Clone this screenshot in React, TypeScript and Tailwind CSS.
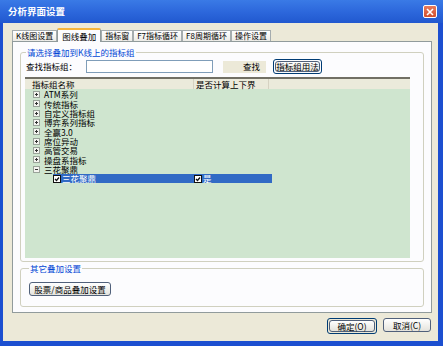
const font = "font-['Noto_Sans_CJK_SC','Noto_Sans',sans-serif]";

const tabs = ["K线图设置", "图线叠加", "指标窗", "F7指标循环", "F8周期循环", "操作设置"];

const groups = [
  "ATM系列",
  "传统指标",
  "自定义指标组",
  "博弈系列指标",
  "全赢3.0",
  "席位异动",
  "高管交易",
  "操盘系指标",
];

function Expander({ open }: { open?: boolean }) {
  return (
    <svg width="7" height="7" viewBox="0 0 7 7" className="shrink-0">
      <rect x="0.5" y="0.5" width="6" height="6" fill="#f4f4f0" stroke="#9aa39a" />
      <path d="M2 3.5h3" stroke="#333" />
      {!open && <path d="M3.5 2v3" stroke="#333" />}
    </svg>
  );
}

function Check() {
  return (
    <svg width="8" height="8" viewBox="0 0 8 8" className="shrink-0">
      <rect x="0.5" y="0.5" width="7" height="7" fill="#fff" stroke="#111" />
      <path d="M2 4l1.5 1.5L6 2.5" stroke="#111" strokeWidth="1.3" fill="none" />
    </svg>
  );
}

function XpButton({ label, className }: { label: string; className?: string }) {
  return (
    <div
      className={[
        "flex items-center justify-center rounded-[3px] border border-[#50607a] bg-gradient-to-b from-[#ffffff] to-[#e4e3dc] text-[8.5px] leading-none text-black",
        className,
      ].join(" ")}
    >
      {label}
    </div>
  );
}

export default function App() {
  return (
    <div className={`${font} flex h-[346px] w-[443px] flex-col bg-[#1c4fd0] select-none`}>
      {/* title bar */}
      <div className="flex h-[23px] shrink-0 items-center justify-between bg-gradient-to-b from-[#3a7ae6] via-[#2d68dc] to-[#2158cf] pl-[8px] pr-[6px]">
        <span className="text-[9.5px] font-bold text-white">分析界面设置</span>
        <div className="flex h-[13px] w-[14px] items-center justify-center rounded-[2px] border border-white bg-gradient-to-b from-[#e87a5c] to-[#d2502d]">
          <svg width="8" height="8" viewBox="0 0 8 8">
            <path d="M1 1l6 6M7 1L1 7" stroke="#fff" strokeWidth="1.6" />
          </svg>
        </div>
      </div>

      {/* body */}
      <div className="ml-[3px] mr-[5px] mb-[5px] flex flex-1 flex-col bg-[#ece9d8] pl-[9px] pr-[6px] pt-[5px]">
        {/* tabs */}
        <div className="flex h-[13px] items-end">
          {tabs.map((t, i) =>
            i === 1 ? (
              <div
                key={t}
                className="relative z-10 -mb-px flex h-[14px] items-center rounded-t-[2px] border border-b-0 border-[#919b9c] border-t-[#f5b53c] border-t-2 bg-[#fcfcfe] px-[4px] text-[8.5px] leading-none text-black"
              >
                {t}
              </div>
            ) : (
              <div
                key={t}
                className="flex h-[11px] items-center border border-b-0 border-[#a5acae] bg-gradient-to-b from-[#ffffff] to-[#ecebe6] px-[3px] text-[8px] leading-none text-black"
              >
                {t}
              </div>
            ),
          )}
        </div>

        {/* panel */}
        <div className="flex h-[272px] w-[420px] flex-col border border-[#919b9c] bg-[#fcfcfe] px-[7px]">
          <fieldset className="mt-[5px] h-[215px] rounded-[3px] border border-[#d0d0bf] px-[4px] pr-[13px]">
            <legend className="ml-[1px] px-[1px] text-[8.5px] leading-[10px] text-[#0046d5]">
              请选择叠加到K线上的指标组
            </legend>
            <div className="mt-[3px] flex h-[13px] items-center">
              <span className="ml-[1px] w-[60px] text-[8.5px] leading-none text-black">查找指标组：</span>
              <div className="h-[13px] w-[127px] border border-[#7f9db9] bg-white" />
              <div className="ml-[10px] flex h-[12px] w-[43px] items-center justify-end bg-[#ece9d8] pr-[6px] text-[8.5px] leading-none text-black">
                查找
              </div>
              <div className="ml-[7px] rounded-[3px] border border-[#003c74] p-px">
                <XpButton
                  label="指标组用法"
                  className="h-[11px] w-[45px] border-[#7da2ce] rounded-[2px]"
                />
              </div>
            </div>

            {/* list */}
            <div className="mt-[4px] flex h-[181px] flex-col border-t-2 border-[#716f64] bg-[#cfe5cf]">
              <div className="flex h-[10px] shrink-0 bg-[#ebeadb] text-[8.5px] leading-[10px] text-black">
                <div className="w-[169px] border-r border-[#d6d2c2] pl-[7px]">指标组名称</div>
                <div className="w-[75px] border-r border-[#d6d2c2] pl-[2px]">是否计算上下界</div>
              </div>
              <div className="flex flex-col pt-[1px] text-[8.5px] text-black">
                {groups.map((g) => (
                  <div key={g} className="flex h-[9.33px] items-center gap-[4px] pl-[8px] leading-none">
                    <Expander />
                    <span>{g}</span>
                  </div>
                ))}
                <div className="flex h-[9.33px] items-center gap-[4px] pl-[8px] leading-none">
                  <Expander open />
                  <span>三花聚鼎</span>
                </div>
                <div className="ml-[28px] flex h-[9.33px] w-[219px] items-center bg-[#316ac5] leading-none text-white">
                  <Check />
                  <span className="ml-[1px] w-[132px]">三花聚鼎</span>
                  <Check />
                  <span className="ml-[1px]">是</span>
                </div>
              </div>
            </div>
          </fieldset>

          <fieldset className="mt-[1px] h-[44px] rounded-[3px] border border-[#d0d0bf] px-[8px]">
            <legend className="px-[1px] text-[8.5px] leading-[10px] text-[#0046d5]">其它叠加设置</legend>
            <XpButton label="股票/商品叠加设置" className="mt-[9px] h-[14px] w-[82px]" />
          </fieldset>
        </div>

        {/* dialog buttons */}
        <div className="mt-[5px] flex justify-end gap-[6px] pr-[1px]">
          <div className="rounded-[3px] border border-[#003c74] p-px">
            <XpButton label="确定(O)" className="h-[12px] w-[46px] border-[#7da2ce] rounded-[2px]" />
          </div>
          <XpButton label="取消(C)" className="h-[14px] w-[48px]" />
        </div>
      </div>
    </div>
  );
}
